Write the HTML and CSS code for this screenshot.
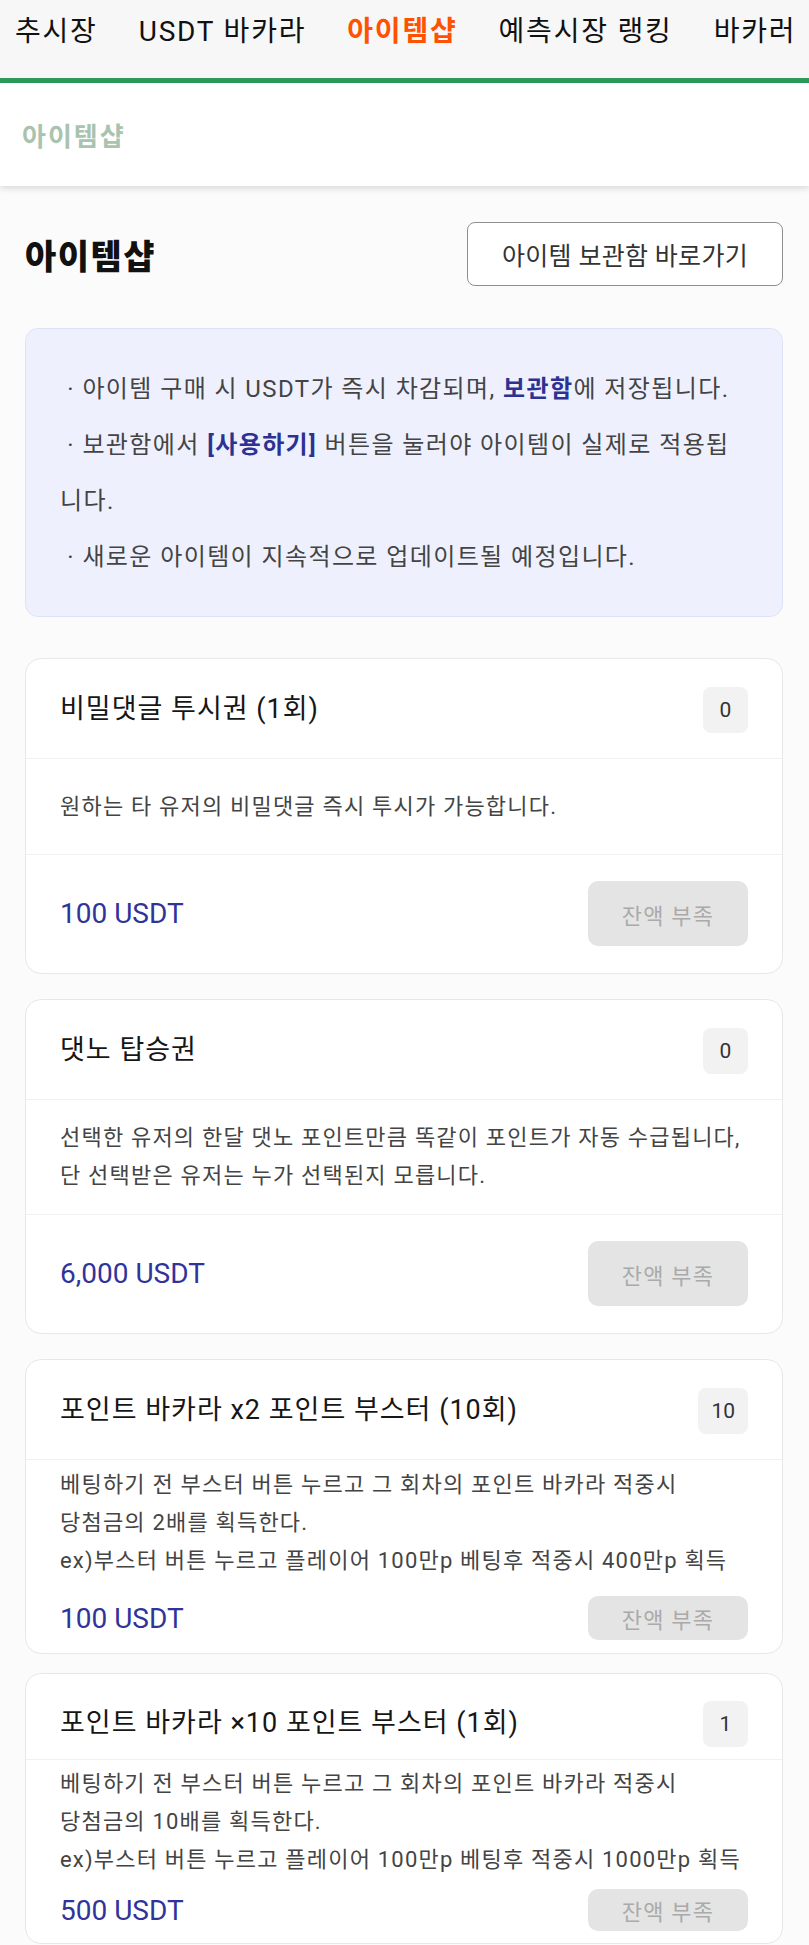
FILE: index.html
```html
<!DOCTYPE html>
<html lang="ko">
<head>
    <meta charset="UTF-8">
    <title>아이템샵</title>
    <link rel="stylesheet" href="styles.css">
</head>
<body>
<nav class="top-nav">
    <a class="nav-item">추시장</a>
    <a class="nav-item">USDT 바카라</a>
    <a class="nav-item active">아이템샵</a>
    <a class="nav-item">예측시장 랭킹</a>
    <a class="nav-item">바카러</a>
</nav>
<div class="sub-header">아이템샵</div>

<main class="shop">
    <div class="shop-head">
        <h1>아이템샵</h1>
        <button class="btn-outline">아이템 보관함 바로가기</button>
    </div>

    <div class="notice">
        <p>&nbsp;· 아이템 구매 시 USDT가 즉시 차감되며, <strong>보관함</strong>에 저장됩니다.</p>
        <p>&nbsp;· 보관함에서 <strong>[사용하기]</strong> 버튼을 눌러야 아이템이 실제로 적용됩니다.</p>
        <p>&nbsp;· 새로운 아이템이 지속적으로 업데이트될 예정입니다.</p>
    </div>

    <div class="item-card">
        <div class="item-head">
            <span class="item-name">비밀댓글 투시권 (1회)</span>
            <span class="item-count">0</span>
        </div>
        <div class="item-desc">원하는 타 유저의 비밀댓글 즉시 투시가 가능합니다.</div>
        <div class="item-foot">
            <span class="item-price">100 USDT</span>
            <button class="btn-buy" disabled>잔액 부족</button>
        </div>
    </div>

    <div class="item-card">
        <div class="item-head">
            <span class="item-name">댓노 탑승권</span>
            <span class="item-count">0</span>
        </div>
        <div class="item-desc">선택한 유저의 한달 댓노 포인트만큼 똑같이 포인트가 자동 수급됩니다,<br>단 선택받은 유저는 누가 선택된지 모릅니다.</div>
        <div class="item-foot">
            <span class="item-price">6,000 USDT</span>
            <button class="btn-buy" disabled>잔액 부족</button>
        </div>
    </div>

    <div class="item-card long">
        <div class="item-head">
            <span class="item-name">포인트 바카라 x2 포인트 부스터 (10회)</span>
            <span class="item-count">10</span>
        </div>
        <div class="item-desc">베팅하기 전 부스터 버튼 누르고 그 회차의 포인트 바카라 적중시<br>당첨금의 2배를 획득한다.<br>ex)부스터 버튼 누르고 플레이어 100만p 베팅후 적중시 400만p 획득</div>
        <div class="item-foot">
            <span class="item-price">100 USDT</span>
            <button class="btn-buy" disabled>잔액 부족</button>
        </div>
    </div>

    <div class="item-card compact">
        <div class="item-head">
            <span class="item-name">포인트 바카라 ×10 포인트 부스터 (1회)</span>
            <span class="item-count">1</span>
        </div>
        <div class="item-desc">베팅하기 전 부스터 버튼 누르고 그 회차의 포인트 바카라 적중시<br>당첨금의 10배를 획득한다.<br>ex)부스터 버튼 누르고 플레이어 100만p 베팅후 적중시 1000만p 획득</div>
        <div class="item-foot">
            <span class="item-price">500 USDT</span>
            <button class="btn-buy" disabled>잔액 부족</button>
        </div>
    </div>
</main>
</body>
</html>
```

FILE: styles.css
```css
body {
    margin: 0;
    font-family: Roboto, "Noto Sans CJK KR", sans-serif;
    background-color: #fbfbfb;
    color: #222;
}

.top-nav {
    display: flex;
    gap: 41px;
    height: 83px;
    padding: 13px 0 0 15px;
    box-sizing: border-box;
    background-color: #f7f7f7;
    border-bottom: 5px solid #2c9a5a;
    white-space: nowrap;
    overflow: hidden;
}

.nav-item {
    flex-shrink: 0;
    font-size: 28px;
    line-height: 38px;
    letter-spacing: 1.8px;
    color: #111;
}

.nav-item.active {
    color: #ff5100;
    font-weight: 700;
}

.sub-header {
    display: flex;
    align-items: center;
    height: 103px;
    padding-left: 22px;
    background: #fff;
    box-shadow: 0 3px 6px rgba(0, 0, 0, 0.12);
    font-size: 26px;
    font-weight: 700;
    letter-spacing: 2px;
    color: #a9c3ae;
}

.shop {
    padding: 36px 26px 20px 25px;
}

.shop-head {
    display: flex;
    justify-content: space-between;
    align-items: center;
}

.shop-head h1 {
    margin: 0;
    font-size: 34px;
    font-weight: 900;
    letter-spacing: 1.5px;
    color: #111;
}

.btn-outline {
    height: 64px;
    padding: 0 34px;
    background: #fff;
    border: 1px solid #8f8f8f;
    border-radius: 8px;
    font-family: inherit;
    font-size: 25px;
    letter-spacing: 0.3px;
    color: #333;
}

.notice {
    margin-top: 42px;
    padding: 32px 37px 31px 34px;
    background-color: #eef1fd;
    border: 1px solid #dde3f6;
    border-radius: 13px;
    font-size: 24px;
    line-height: 56px;
    letter-spacing: 1.4px;
    color: #444;
}

.notice p {
    margin: 0;
}

.notice strong {
    color: #2d3192;
}

.item-card {
    margin-top: 41px;
    background: #fff;
    border: 1px solid #e7e7ea;
    border-radius: 16px;
}

.item-card + .item-card {
    margin-top: 25px;
}

.item-head {
    display: flex;
    justify-content: space-between;
    align-items: center;
    padding: 28px 34px 25px;
    border-bottom: 1px solid #f1f1f1;
}

.item-name {
    font-size: 27px;
    font-weight: 400;
    line-height: 1.4;
    letter-spacing: 1px;
    color: #161616;
}

.item-count {
    display: flex;
    align-items: center;
    justify-content: center;
    min-width: 45px;
    height: 46px;
    padding: 0 13px;
    box-sizing: border-box;
    background-color: #f2f2f2;
    border-radius: 8px;
    font-size: 21px;
    color: #333;
}

.item-desc {
    display: flex;
    align-items: center;
    min-height: 96px;
    box-sizing: border-box;
    padding: 19px 26px 19px 34px;
    border-bottom: 1px solid #f1f1f1;
    font-size: 22px;
    line-height: 38px;
    letter-spacing: 1.2px;
    color: #444;
}

.item-foot {
    display: flex;
    justify-content: space-between;
    align-items: center;
    padding: 26px 34px 27px;
}

.item-price {
    font-size: 28px;
    color: #30349a;
}

.btn-buy {
    width: 160px;
    height: 65px;
    border: none;
    border-radius: 10px;
    background-color: #e4e4e4;
    font-family: inherit;
    font-size: 22px;
    letter-spacing: 1.2px;
    color: #aaa;
}

/* longer descriptions: text runs straight into the footer */
.long .item-desc,
.compact .item-desc {
    display: block;
    min-height: 0;
    border-bottom: none;
}

.long .item-desc {
    padding: 6px 26px 0 34px;
}

.long .item-foot {
    padding: 16px 34px 13px;
}

.long .btn-buy {
    height: 44px;
}

.item-card.compact {
    margin-top: 19px;
}

.compact .item-head {
    padding: 27px 34px 12px;
}

.compact .item-desc {
    padding: 5px 26px 0 34px;
}

.compact .item-foot {
    padding: 10px 34px 12px;
}

.compact .btn-buy {
    height: 42px;
}
```
